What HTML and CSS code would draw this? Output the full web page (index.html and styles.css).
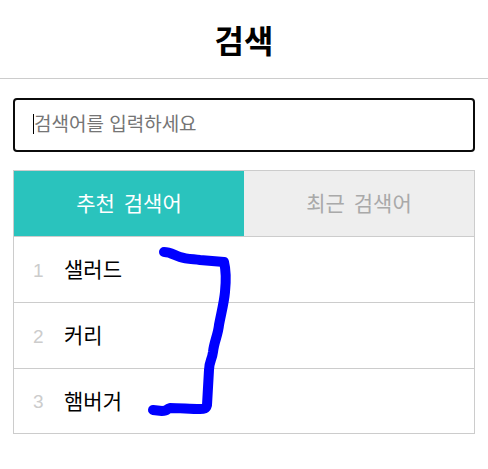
FILE: index.html
```html
<!DOCTYPE html>
<html lang="ko">
  <head>
    <meta charset="utf-8">
    <title>검색</title>
    <link rel="stylesheet" href="styles.css">
  </head>
  <body>
    <header class="page-header">
      <h1>검색</h1>
    </header>
    <main class="content">
      <div class="search-box">
        <span class="caret"></span>
        <span class="placeholder">검색어를 입력하세요</span>
      </div>

      <section class="panel">
        <div class="tabs">
          <div class="tab active">추천 검색어</div>
          <div class="tab">최근 검색어</div>
        </div>
        <ol class="keyword-list">
          <li><span class="rank">1</span>샐러드</li>
          <li><span class="rank">2</span>커리</li>
          <li><span class="rank">3</span>햄버거</li>
        </ol>
      </section>
    </main>

    <!-- hand-drawn marker stroke over the list -->
    <svg class="marker" width="488" height="469" viewBox="0 0 488 469">
      <path d="M164 252 C170 252 174 255 180 257 C186 259 192 259 200 260 L224 262 C226 270 226 282 225 292 C224 303 221 314 219 325 C218 335 214 342 213 352 C212 360 209 362 209 370 L207 405 C206 409 204 409 200 409 C190 409 180 408 170 408 C166 409 168 411 162 411 L153 410" fill="none" stroke="#0000ff" stroke-width="10" stroke-linecap="round" stroke-linejoin="round"/>
    </svg>
  </body>
</html>
```

FILE: styles.css
```css
* {
  box-sizing: border-box;
}

body {
  margin: 0;
  background: #fff;
  color: #000;
  font-family: "Liberation Sans", "Noto Sans CJK KR", sans-serif;
}

.page-header {
  height: 79px;
  border-bottom: 1px solid #ccc;
  display: flex;
  align-items: center;
  justify-content: center;
}

.page-header h1 {
  margin: 0;
  font-size: 32px;
  font-weight: bold;
}

.content {
  padding: 19px 13px 0;
}

.search-box {
  height: 54px;
  border: 2px solid #0b0b0b;
  border-radius: 4px;
  padding: 0 0 5px 18px;
  display: flex;
  align-items: center;
  font-size: 19px;
}

.caret {
  width: 1px;
  height: 20px;
  margin-top: 3px;
  background: #000;
}

.placeholder {
  color: #757575;
}

.panel {
  margin-top: 18px;
  border: 1px solid #ccc;
}

.tabs {
  display: flex;
  height: 66px;
  border-bottom: 1px solid #ccc;
}

.tab {
  flex: 1;
  display: flex;
  align-items: center;
  justify-content: center;
  padding-bottom: 4px;
  background: #eee;
  color: #a9a9a9;
  font-size: 21px;
  word-spacing: 3px;
}

.tab.active {
  background: #2ac3bd;
  color: #fff;
}

.keyword-list {
  margin: 0;
  padding: 0;
  list-style: none;
}

.keyword-list li {
  height: 66px;
  padding: 0 0 3px 19px;
  border-bottom: 1px solid #ccc;
  display: flex;
  align-items: center;
  font-size: 21px;
}

.keyword-list li:last-child {
  height: 64px;
  border-bottom: 0;
}

.rank {
  width: 31px;
  margin-top: 5px;
  color: #ccc;
  font-size: 19px;
}

.marker {
  position: absolute;
  top: 0;
  left: 0;
  pointer-events: none;
}
```
